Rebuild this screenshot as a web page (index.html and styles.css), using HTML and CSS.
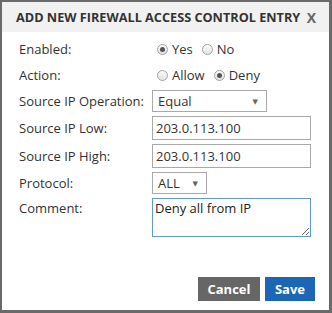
FILE: index.html
```html
<!DOCTYPE html>
<html>
<head>
<meta charset="utf-8">
<link rel="stylesheet" href="styles.css">
</head>
<body>
<div class="dialog">
  <div class="titlebar">
    <span class="title">Add New Firewall Access Control Entry</span>
    <span class="close">x</span>
  </div>
  <div class="content">
    <div class="form">
      <div class="row r22">
        <label class="lbl">Enabled:</label>
        <div class="radios">
          <span class="radio checked"></span><span class="rtext">Yes</span>
          <span class="radio"></span><span class="rtext">No</span>
        </div>
      </div>
      <div class="row r22">
        <label class="lbl">Action:</label>
        <div class="radios">
          <span class="radio"></span><span class="rtext">Allow</span>
          <span class="radio checked"></span><span class="rtext">Deny</span>
        </div>
      </div>
      <div class="row r22">
        <label class="lbl">Source IP Operation:</label>
        <div class="select wide"><span>Equal</span><span class="arrow">▼</span></div>
      </div>
      <div class="row r24">
        <label class="lbl">Source IP Low:</label>
        <input class="text" type="text" value="203.0.113.100">
      </div>
      <div class="row r24">
        <label class="lbl">Source IP High:</label>
        <input class="text" type="text" value="203.0.113.100">
      </div>
      <div class="row r22">
        <label class="lbl">Protocol:</label>
        <div class="select narrow"><span>ALL</span><span class="arrow">▼</span></div>
      </div>
      <div class="row top">
        <label class="lbl">Comment:</label>
        <textarea class="comment">Deny all from IP</textarea>
      </div>
    </div>
    <div class="footer">
      <button class="btn cancel">Cancel</button>
      <button class="btn save">Save</button>
    </div>
  </div>
</div>
</body>
</html>
```
FILE: styles.css
```css
* { box-sizing: border-box; }
html, body { margin: 0; padding: 0; }
body {
  width: 332px;
  height: 313px;
  font-family: "Open Sans", "DejaVu Sans", sans-serif;
  font-size: 13px;
  color: #333;
  background: #fff;
}
.dialog {
  width: 332px;
  height: 313px;
  border-style: solid;
  border-color: #6a6a6a;
  border-width: 2px 3px 3px 2px;
  display: flex;
  flex-direction: column;
  background: #fff;
}
.titlebar {
  height: 30px;
  background: #f1f1f1;
  display: flex;
  align-items: center;
  justify-content: space-between;
  padding: 0 13px 0 14px;
}
.title {
  text-transform: uppercase;
  font-weight: 700;
  font-size: 12.7px;
  color: #333;
  white-space: nowrap;
  letter-spacing: 0;
}
.close {
  font-weight: 700;
  font-size: 14px;
  color: #666;
  text-transform: uppercase;
  line-height: 1;
  margin-top: 2px;
}
.content {
  flex: 1;
  display: flex;
  flex-direction: column;
  padding: 6px 14px 9px 17px;
}
.form {
  display: flex;
  flex-direction: column;
  gap: 4px;
}
.row {
  display: flex;
  align-items: center;
}
.row.r22 { height: 22px; }
.row.r24 { height: 24px; }
.row.top { align-items: flex-start; }
.lbl {
  width: 133px;
  flex: none;
  color: #333;
}
.row.top .lbl { padding-top: 1px; }
.radios {
  display: flex;
  align-items: center;
  padding-left: 5px;
}
.radio {
  width: 11px;
  height: 11px;
  border-radius: 50%;
  border: 1px solid #a4a4a4;
  background: linear-gradient(#fafafa, #e4e4e4);
  display: inline-flex;
  align-items: center;
  justify-content: center;
  margin-right: 4px;
}
.radio.checked::after {
  content: "";
  width: 5px;
  height: 5px;
  border-radius: 50%;
  background: #555;
}
.rtext { margin-right: 9px; }
.select {
  height: 22px;
  border: 1px solid #a9a9a9;
  display: flex;
  align-items: center;
  justify-content: space-between;
  padding: 0 8px 0 5px;
  color: #333;
  background: #fff;
}
.select.wide { width: 115px; }
.select.narrow { width: 55px; }
.arrow {
  font-size: 7px;
  color: #666;
}
.text {
  width: 159px;
  height: 24px;
  border: 1px solid #a9a9a9;
  padding: 0 3px;
  font-family: "Open Sans", "DejaVu Sans", sans-serif;
  font-size: 13px;
  color: #333;
  outline: none;
}
.comment {
  width: 159px;
  height: 39px;
  border: 1px solid #5b9bd5;
  padding: 0 2px;
  font-family: "Open Sans", "DejaVu Sans", sans-serif;
  font-size: 13px;
  line-height: 18px;
  color: #222;
  resize: both;
  outline: none;
}
.footer {
  margin-top: auto;
  display: flex;
  justify-content: flex-end;
  gap: 5px;
}
.btn {
  height: 24px;
  border: none;
  color: #fff;
  font-family: "Open Sans", "DejaVu Sans", sans-serif;
  font-weight: 700;
  font-size: 13px;
  padding: 0;
}
.cancel { background: #666; width: 62px; }
.save { background: #1b67b5; width: 50px; }
```
